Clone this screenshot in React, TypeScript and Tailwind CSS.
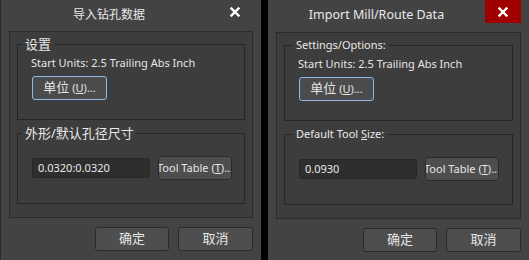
import React from 'react';

const font = "font-['Noto_Sans','Noto_Sans_CJK_SC',sans-serif]";

const CloseX: React.FC = () => (
  <svg width="10" height="10" viewBox="0 0 10 10">
    <path d="M1.5 1.5 L8.5 8.5 M8.5 1.5 L1.5 8.5" stroke="#ffffff" strokeWidth="2.4" strokeLinecap="square" />
  </svg>
);

const Btn: React.FC<{ children: React.ReactNode; focused?: boolean; className?: string }> = ({ children, focused, className }) => (
  <button
    className={
      'flex items-center justify-center overflow-hidden whitespace-nowrap rounded-[3px] border text-[#e6e6e6] ' +
      (focused ? 'border-[#8cb9e6] bg-[#4b4b4b] ' : 'border-[#2a2a2a] bg-[#4e4e4e] ') +
      (className || '')
    }
  >
    {children}
  </button>
);

type DialogProps = {
  title: string;
  red?: boolean;
  titleH: string;
  group1: React.ReactNode;
  group2: React.ReactNode;
  legendCls: string;
  value: string;
  edge?: string;
};

const Dialog: React.FC<DialogProps> = ({ title, red, titleH, group1, group2, legendCls, value, edge }) => (
  <div className={'flex h-[260px] w-[261px] flex-col bg-[#434343] ' + (edge || '')}>
    <div className={'flex items-start ' + titleH}>
      <div className={'flex-1 pt-[6px] text-center leading-[18px] text-[#e8e8e8] ' + (red ? 'text-[12.5px]' : 'text-[12px]')}>{title}</div>
      {red ? (
        <div className="mr-[8px] flex h-[23px] w-[36px] items-center justify-center bg-[#a00000]">
          <CloseX />
        </div>
      ) : (
        <div className="flex w-[44px] pl-[13px] pt-[7px]">
          <CloseX />
        </div>
      )}
    </div>
    <div className="mx-[8px] h-[187px] border border-[#2c2c2c] bg-[#3d3d3d] px-[7px] pt-[4px]">
      <fieldset className="h-[84px] border border-[#262626] pl-[4px]">
        <legend className={'px-[3px] leading-[16px] text-[#e8e8e8] ' + legendCls}>{group1}</legend>
        <div className="pl-[9px] pt-[3px] text-[11px] leading-[16px] text-[#e6e6e6]">Start Units: 2.5 Trailing Abs Inch</div>
        <div className="pl-[10px] pt-[5px]">
          <Btn focused className="h-[24px] w-[75px] gap-[3px]">
            <span className="text-[13px]">单位</span>
            <span className="text-[11px]">(<span className="underline">U</span>)...</span>
          </Btn>
        </div>
      </fieldset>
      <fieldset className="mt-[5px] h-[79px] border border-[#262626] pl-[4px]">
        <legend className={'px-[3px] leading-[16px] text-[#e8e8e8] ' + legendCls}>{group2}</legend>
        <div className="flex items-center gap-[8px] pl-[10px] pt-[15px]">
          <div className="flex h-[20px] w-[118px] items-center rounded-[3px] border border-[#262626] bg-[#2e2e2e] pl-[5px] text-[11px] text-[#e8e8e8]">
            {value}
          </div>
          <Btn className="h-[24px] w-[74px] text-[11px]">
            Tool Table (<span className="underline">T</span>)...
          </Btn>
        </div>
      </fieldset>
    </div>
    <div className="mr-[8px] mt-[9px] flex justify-end gap-[9px]">
      <Btn className="h-[24px] w-[74px] text-[13px]">确定</Btn>
      <Btn className="h-[24px] w-[75px] text-[13px]">取消</Btn>
    </div>
  </div>
);

export default function App() {
  return (
    <div className={'flex h-[260px] w-[529px] gap-[7px] bg-black ' + font}>
      <Dialog
        title="导入钻孔数据"
        titleH="h-[31px]"
        edge="border-l border-[#2a2a2a]"
        legendCls="ml-0 text-[13px]"
        group1="设置"
        group2="外形/默认孔径尺寸"
        value="0.0320:0.0320"
      />
      <Dialog
        title="Import Mill/Route Data"
        red
        titleH="h-[32px]"
        legendCls="ml-[4px] text-[11px]"
        group1="Settings/Options:"
        group2={
          <>
            Default Tool <span className="underline">S</span>ize:
          </>
        }
        value="0.0930"
      />
    </div>
  );
}
